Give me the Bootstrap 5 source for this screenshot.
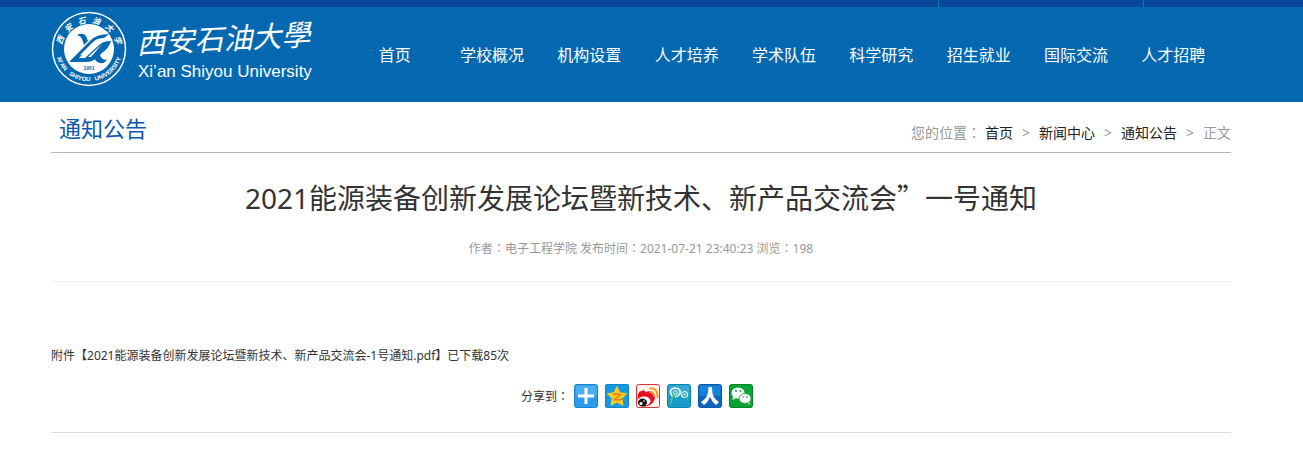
<!DOCTYPE html>
<html lang="zh-CN">
<head>
<meta charset="utf-8">
<meta name="viewport" content="width=device-width, initial-scale=1">
<title>通知公告 - 西安石油大学</title>
<link href="https://cdn.jsdelivr.net/npm/bootstrap@5.3.0/dist/css/bootstrap.min.css" rel="stylesheet">
<style>
  body { font-family: "Noto Sans", "Noto Sans CJK SC", sans-serif; font-size: 12px; line-height: 24px; color: #333; background: #fff; }
  a { color: inherit; text-decoration: none; }
  .site-wrap { padding-right: 21px; }
  .site-inner { max-width: 1180px; }
  .top-strip { height: 7px; background: #064798; }
  .strip-link { width: 205px; border-left: 1px solid #0878c4; }
  .strip-end { width: 160px; }
  .site-header { background: #0468b0; color: #fff; }
  .site-header .site-inner { min-height: 95px; }
  .main-nav { margin-left: 31px; margin-right: 9px; font-size: 16px; }
  .main-nav .nav-link { color: #fff; padding: 0; }
  .section-bar { height: 51px; border-bottom: 1px solid #b9b7b0; }
  .section-title { font-size: 22px; line-height: 32px; padding-top: 2px; color: #0a57ab; }
  .crumbs { font-size: 14px; color: #999; }
  .crumbs a { color: #222; }
  .crumbs li + li::before { content: ">"; display: inline-block; width: 26px; text-align: center; color: #999; }
  .crumbs .crumb-home::before { content: none; }
  .article-title { font-size: 28px; line-height: 40px; padding-top: 24px; }
  .cjk-mark { font-family: "Noto Sans CJK SC", sans-serif; }
  .colon { font-family: "Noto Sans CJK TC", sans-serif; line-height: 1; }
  .article-meta { color: #999; padding-top: 19px; padding-bottom: 20px; border-bottom: 1px solid #eee; }
  .attachment { padding-top: 62px; }
  .share-bar { gap: 7px; padding-top: 16px; padding-bottom: 24px; padding-right: 8px; border-bottom: 1px solid #ddd; }
  .share-label { margin-right: -2px; padding-top: 2px; line-height: 22px; }
  .share-bar a, .share-bar svg { display: block; }
</style>
<script src="https://cdn.jsdelivr.net/npm/bootstrap@5.3.0/dist/js/bootstrap.bundle.min.js"></script>
</head>
<body>
<div class="top-strip d-flex justify-content-end">
  <div class="strip-link"></div>
  <div class="strip-link strip-end"></div>
</div>
<header class="site-header site-wrap">
  <div class="site-inner mx-auto d-flex align-items-center">
    <a href="#" class="pb-2 mb-1" aria-label="西安石油大学">
      <svg class="d-block" width="264" height="80" viewBox="0 0 264 80" fill="#fff">
        <defs>
          <path id="arcTop" d="M10 42A28 28 0 0 1 66 42"/>
          <path id="arcBottom" d="M4.500 36A33.600 33.600 0 1 0 71.500 36"/>
        </defs>
        <circle cx="38" cy="40" r="36.500" fill="none" stroke="#fff" stroke-width="1.500"/>
        <circle cx="38" cy="40" r="25"/>
        <text font-size="8" font-weight="700" font-style="italic" font-family="Noto Sans CJK SC, sans-serif"><textPath href="#arcTop" startOffset="50%" text-anchor="middle">西&#160;&#160;&#160;安&#160;&#160;&#160;石&#160;&#160;&#160;油&#160;&#160;&#160;大&#160;&#160;&#160;学</textPath></text>
        <text font-size="6" font-weight="700" font-family="Liberation Sans, sans-serif"><textPath href="#arcBottom" startOffset="50%" text-anchor="middle">XI'AN&#160;&#160; SHIYOU&#160;&#160; UNIVERSITY</textPath></text>
        <g fill="#0468b0">
          <path d="M26 26q6-3 9 1l2 5-4 4-2-6q-1-3-5-4z"/>
          <path d="M19 52l20-20q6-7 19-7l-5 4q-6 0-9 3L28 49h6l14-13q4-4 12-4-2 7-9 12l-4 4q-5 5-12 5H19z"/>
          <path d="M41 44l5-4 4 8q2 4 6 2-2 5-7 4-4-1-5-4z"/>
        </g>
        <path d="M29 46l13-13q3-3 6-3L32 46z"/>
        <path d="M37 48l14-13-11 13z"/>
        <text x="38" y="61" font-size="5" font-weight="700" text-anchor="middle" fill="#0468b0" font-family="Liberation Sans, sans-serif">1951</text>
        <text x="86" y="45" font-size="29" font-style="italic" font-family="Noto Sans CJK SC, sans-serif" transform="rotate(-3 86 45)">西安石油大學</text>
        <text x="87" y="68" font-size="17" font-family="Liberation Sans, sans-serif">Xi’an Shiyou University</text>
      </svg>
    </a>
    <nav class="main-nav flex-fill">
      <ul class="nav nav-fill nav-justified flex-nowrap">
        <li class="nav-item"><a class="nav-link" href="#">首页</a></li>
        <li class="nav-item"><a class="nav-link" href="#">学校概况</a></li>
        <li class="nav-item"><a class="nav-link" href="#">机构设置</a></li>
        <li class="nav-item"><a class="nav-link" href="#">人才培养</a></li>
        <li class="nav-item"><a class="nav-link" href="#">学术队伍</a></li>
        <li class="nav-item"><a class="nav-link" href="#">科学研究</a></li>
        <li class="nav-item"><a class="nav-link" href="#">招生就业</a></li>
        <li class="nav-item"><a class="nav-link" href="#">国际交流</a></li>
        <li class="nav-item"><a class="nav-link" href="#">人才招聘</a></li>
      </ul>
    </nav>
  </div>
</header>
<main class="site-wrap">
  <div class="site-inner mx-auto">
    <div class="section-bar d-flex justify-content-between align-items-center">
      <h2 class="section-title fw-normal mb-0 ps-2">通知公告</h2>
      <nav class="crumbs d-flex pt-2 mt-1" aria-label="您的位置">
        <span class="me-1">您的位置<span class="colon" lang="zh-TW">：</span></span>
        <ol class="list-unstyled d-flex mb-0">
          <li class="crumb-home"><a href="#">首页</a></li>
          <li><a href="#">新闻中心</a></li>
          <li><a href="#">通知公告</a></li>
          <li>正文</li>
        </ol>
      </nav>
    </div>
    <article>
      <h1 class="article-title fw-normal text-center mb-0">2021能源装备创新发展论坛暨新技术、新产品交流会<span class="cjk-mark">”</span>一号通知</h1>
      <div class="article-meta text-center">作者<span class="colon" lang="zh-TW">：</span>电子工程学院 发布时间<span class="colon" lang="zh-TW">：</span>2021-07-21 23:40:23 浏览<span class="colon" lang="zh-TW">：</span>198</div>
      <div class="attachment">附件【<a href="#">2021能源装备创新发展论坛暨新技术、新产品交流会-1号通知.pdf</a>】已下载85次</div>
      <div class="share-bar d-flex justify-content-center">
        <span class="share-label">分享到<span class="colon" lang="zh-TW">：</span></span>
        <a href="#" aria-label="更多"><svg width="24" height="24" viewBox="0 0 24 24"><rect x=".5" y=".5" width="23" height="23" rx="2" fill="#2c9bea" stroke="#1683d0"/><path d="M1.500 12V1.500h21V12z" fill="#4badf2"/><path d="M10.500 4h3v6.500H20v3h-6.500V20h-3v-6.500H4v-3h6.500z" fill="#fff"/></svg></a>
        <a href="#" aria-label="QQ空间"><svg width="24" height="24" viewBox="0 0 24 24"><rect width="24" height="24" rx="2" fill="#1699e4"/><rect x=".5" y=".5" width="23" height="23" rx="2" fill="none" stroke="#0979c2" stroke-dasharray="2 1"/><path d="M12 2.500l3 6.300 6.700.9-4.900 4.700 1.200 6.900-6-3.300-6 3.300 1.200-6.900-4.900-4.700 6.700-.9z" fill="#fecb1c" stroke="#fecb1c" stroke-linejoin="round"/><path d="M8 10.500q4-1 7.500 0L9.500 15.500q4 1 7.500-.5" fill="none" stroke="#e87a10" stroke-width="1.600"/></svg></a>
        <a href="#" aria-label="新浪微博"><svg width="24" height="24" viewBox="0 0 24 24"><rect x=".5" y=".5" width="23" height="23" rx="2" fill="#fff2ee" stroke="#d8343a"/><path d="M1.500 15C1.500 10 3 7 5.500 7c1.500-1.500 4-.5 4 1.500 3-2 6.500-1.500 6 1.500 3 .5 4 3 3 5.500-1.500 4.500-6 7-10.500 7S1.500 19.500 1.500 15z" fill="#e60f20"/><ellipse cx="8" cy="17" rx="6.500" ry="4.500" fill="#fff"/><ellipse cx="6.500" cy="18.500" rx="4.500" ry="4" fill="#151515"/><circle cx="5" cy="19.500" r="1.500" fill="#fff"/><circle cx="8" cy="17" r=".8" fill="#fff"/><path d="M14 4.500q8-.5 7.500 8.500M14 8q4 0 4 4" fill="none" stroke="#f9931d" stroke-width="1.800" stroke-linecap="round"/></svg></a>
        <a href="#" aria-label="腾讯微博"><svg width="24" height="24" viewBox="0 0 24 24"><rect x=".5" y=".5" width="23" height="23" rx="2" fill="#189bc8" stroke="#0d83af"/><path d="M1.500 12V1.500h21V12z" fill="#35accf"/><path d="M4 20q0-7 4-10" fill="none" stroke="#55c957" stroke-width="1.600"/><path d="M5 12Q1.500 6 6 4.500q5-1.500 7 2 1 5-5 6.500" fill="none" stroke="#f3fcff" stroke-width="1.600"/><circle cx="8.500" cy="8.500" r="1.800" fill="none" stroke="#fff"/><circle cx="17.500" cy="10.500" r="3" fill="none" stroke="#d9f5fc" stroke-width="1.200"/><circle cx="17.500" cy="10.500" r="1" fill="#fff"/><path d="M19.500 13l1.500 2.500" stroke="#55c957"/></svg></a>
        <a href="#" aria-label="人人网"><svg width="24" height="24" viewBox="0 0 24 24"><rect x=".5" y=".5" width="23" height="23" rx="2" fill="#0c66be" stroke="#0758aa"/><path d="M1.500 12V1.500h21V12z" fill="#1883d6"/><path d="M10.500 3H14c0 8 2 12 7 15l-3 3q-4-3-6-8-2 5-6 8l-3-3c5-3 7.500-7 7.500-15z" fill="#fff"/></svg></a>
        <a href="#" aria-label="微信"><svg width="24" height="24" viewBox="0 0 24 24"><rect x=".5" y=".5" width="23" height="23" rx="2" fill="#0ba336" stroke="#078227"/><path d="M4 12l-.5 4 3.500-2z" fill="#fff"/><ellipse cx="9" cy="9" rx="6.500" ry="5.500" fill="#fff"/><path d="M18 18l2.500 3v-5z" fill="#fff"/><ellipse cx="16" cy="14.500" rx="6" ry="5" fill="#fff" stroke="#0ba336" stroke-width=".8"/><g fill="#168c3a"><circle cx="7" cy="7" r=".9"/><circle cx="11.500" cy="7" r=".9"/><circle cx="14" cy="13" r=".8"/><circle cx="18" cy="13" r=".8"/></g></svg></a>
      </div>
    </article>
  </div>
</main>
</body>
</html>
